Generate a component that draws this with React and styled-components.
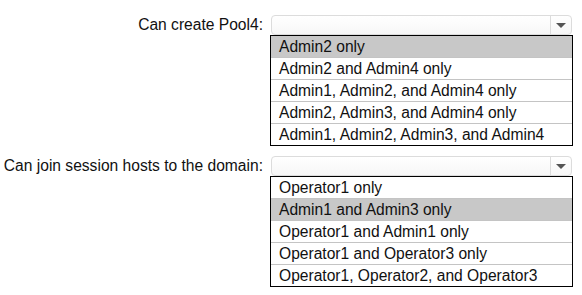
import React from "react";
import styled, { createGlobalStyle } from "styled-components";

const Global = createGlobalStyle`
  html, body { margin: 0; padding: 0; background: #fff; }
  body { font-family: "Liberation Sans", Arial, sans-serif; color: #111; }
`;

const Page = styled.div`
  display: grid;
  grid-template-columns: 263px 303px;
  column-gap: 7px;
  row-gap: 10px;
  padding-top: 15px;
  font-size: 15.6px;
`;

const Label = styled.div`
  text-align: right;
  height: 20px;
  line-height: 20px;
  white-space: nowrap;
`;

const Control = styled.div`
  display: flex;
  flex-direction: column;
`;

const Select = styled.div`
  height: 20px;
  box-sizing: border-box;
  margin: 0 1px;
  border: 1px solid #dcdcdc;
  border-radius: 4px;
  background: linear-gradient(#fff, #f7f7f7);
  display: flex;
  justify-content: flex-end;
`;

const ArrowBox = styled.div`
  width: 20px;
  border-left: 1px solid #dcdcdc;
  display: flex;
  align-items: center;
  justify-content: center;
`;

const List = styled.div`
  border: 1px solid #000;
  display: flex;
  flex-direction: column;
`;

const Option = styled.div`
  height: 21px;
  line-height: 21px;
  padding-left: 8px;
  white-space: nowrap;
  background: ${(p) => (p.$selected ? "#c8c8c8" : "#fff")};
  & + & { border-top: 1px solid #c4c4c4; }
`;

const Field = ({ label, options, selected }) => (
  <>
    <Label>{label}</Label>
    <Control>
      <Select>
        <ArrowBox>
          <svg width="10" height="5" viewBox="0 0 10 5">
            <path d="M0 0 H10 L5 5 Z" fill="#555" />
          </svg>
        </ArrowBox>
      </Select>
      <List>
        {options.map((o, i) => (
          <Option key={o} $selected={i === selected}>{o}</Option>
        ))}
      </List>
    </Control>
  </>
);

export default function App() {
  return (
    <>
      <Global />
      <Page>
        <Field
          label="Can create Pool4:"
          selected={0}
          options={[
            "Admin2 only",
            "Admin2 and Admin4 only",
            "Admin1, Admin2, and Admin4 only",
            "Admin2, Admin3, and Admin4 only",
            "Admin1, Admin2, Admin3, and Admin4",
          ]}
        />
        <Field
          label="Can join session hosts to the domain:"
          selected={1}
          options={[
            "Operator1 only",
            "Admin1 and Admin3 only",
            "Operator1 and Admin1 only",
            "Operator1 and Operator3 only",
            "Operator1, Operator2, and Operator3",
          ]}
        />
      </Page>
    </>
  );
}
